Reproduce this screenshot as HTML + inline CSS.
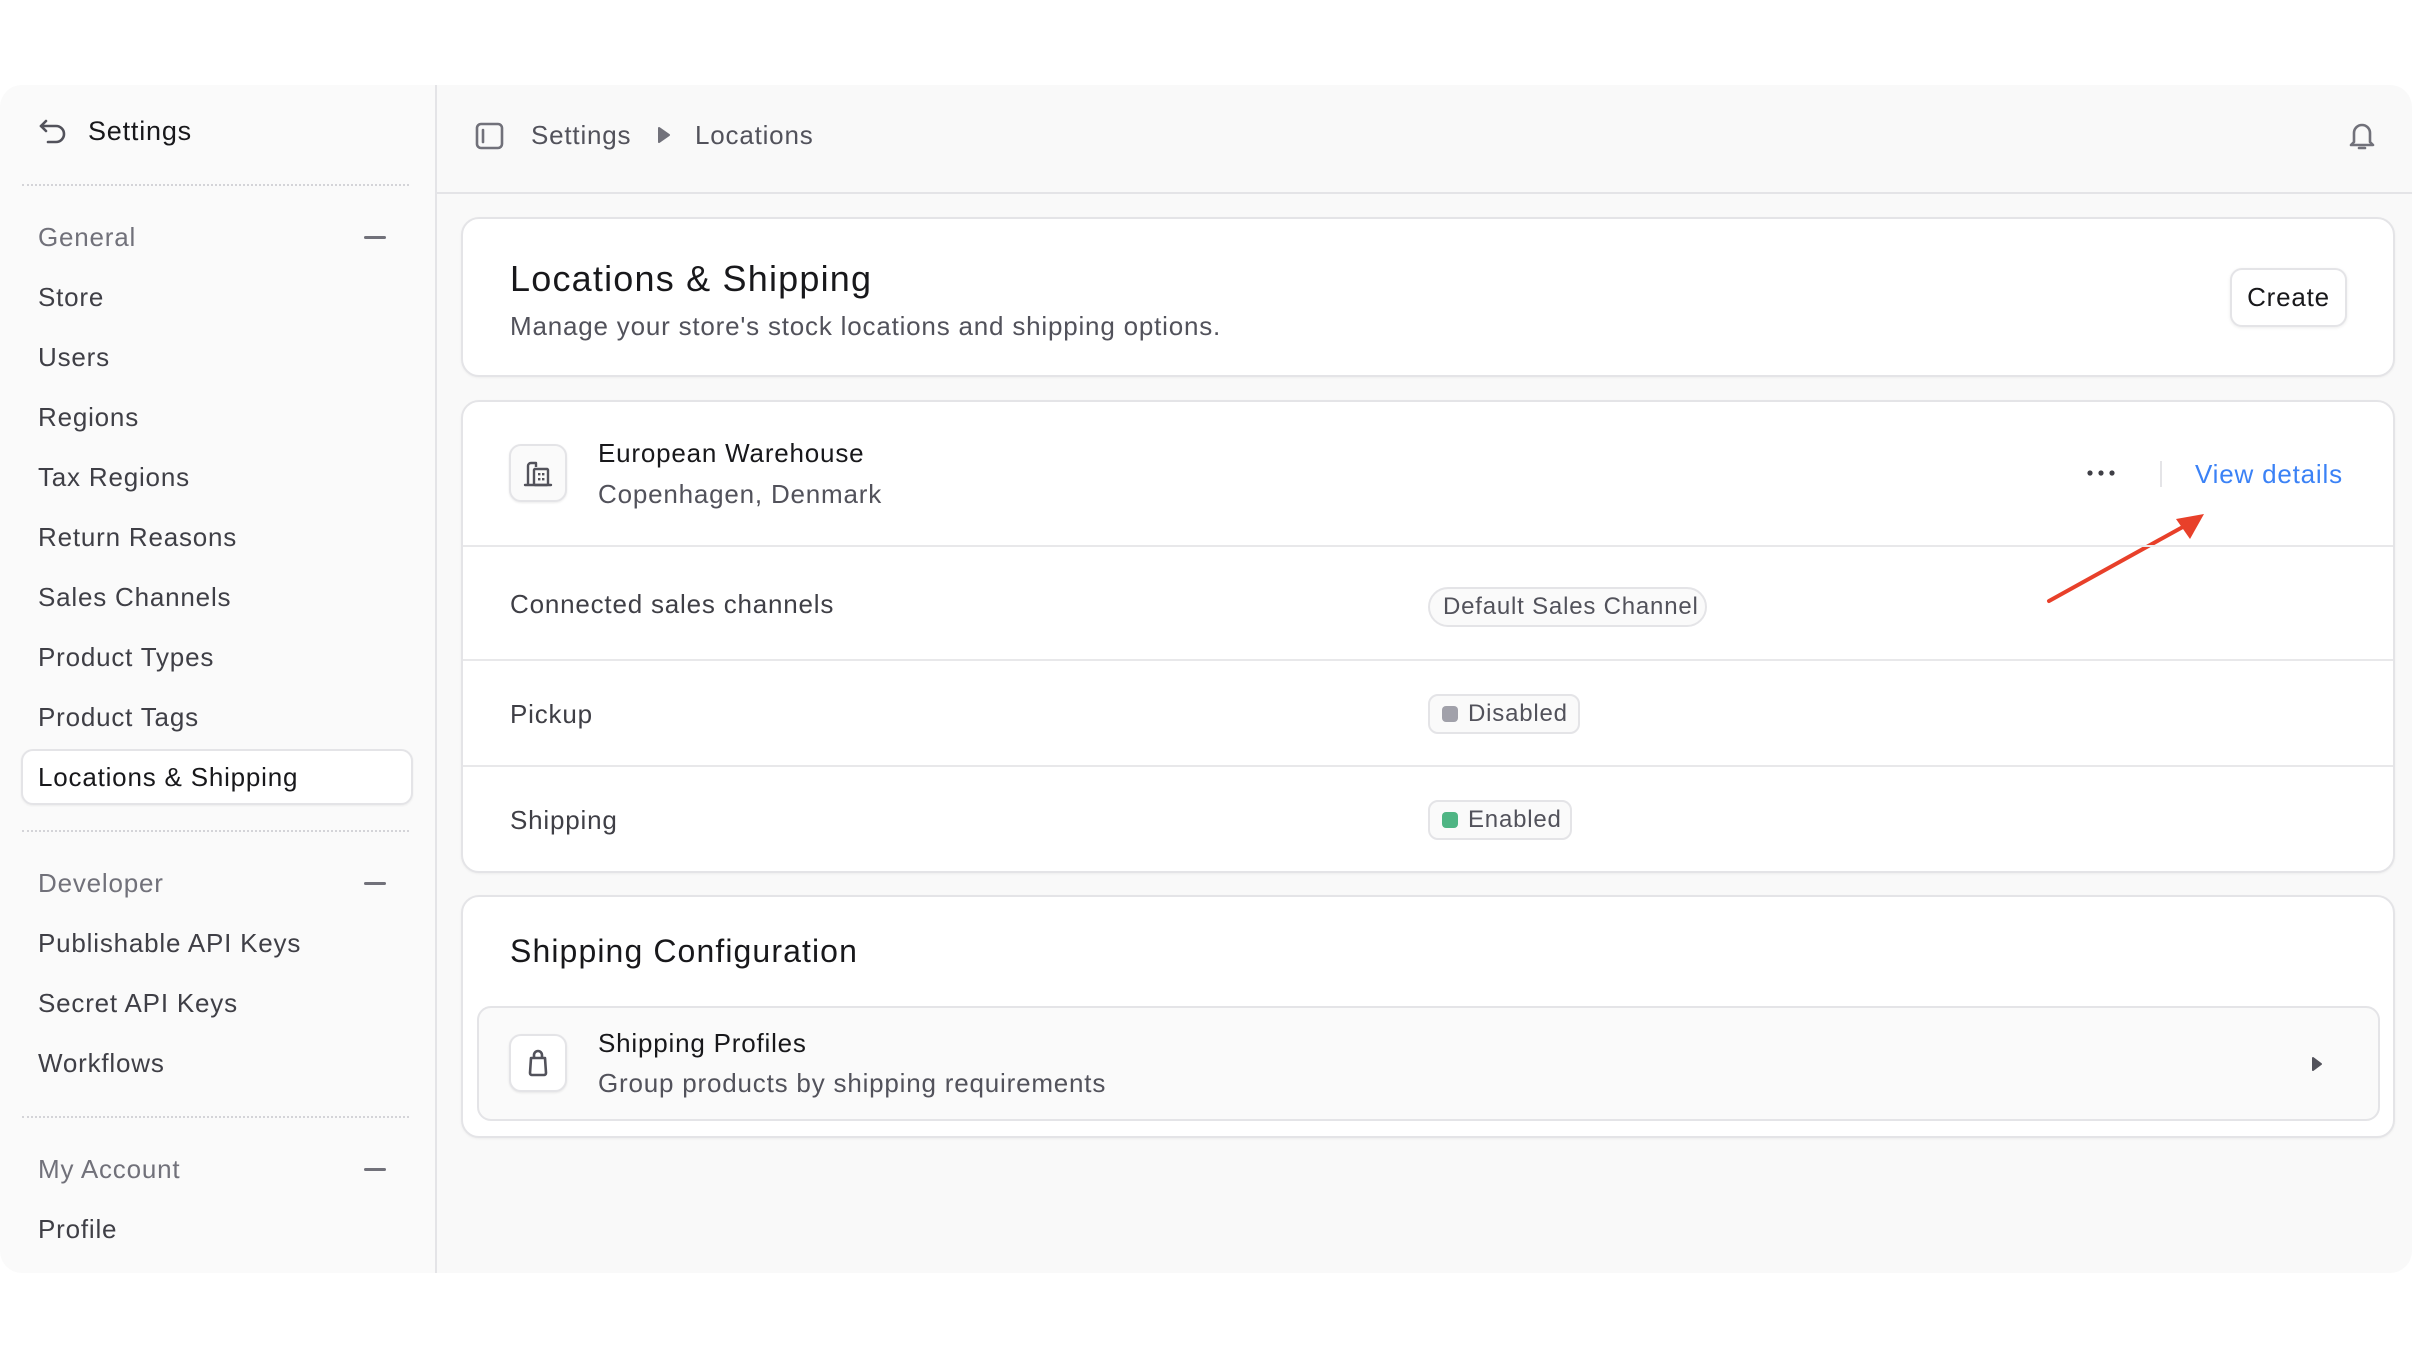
<!DOCTYPE html>
<html><head><meta charset="utf-8"><style>
*{box-sizing:border-box;margin:0;padding:0}
body{width:2412px;height:1357px;background:#fff;font-family:"Liberation Sans",sans-serif;position:relative;overflow:hidden;color:#18181b;letter-spacing:0.8px}
.abs{position:absolute}
.t{position:absolute;white-space:nowrap;line-height:30px;font-size:26px}
.side{left:0;top:85px;width:437px;height:1188px;background:#fafafa;border-right:2px solid #e4e4e7;border-radius:22px 0 0 22px}
.main{left:437px;top:85px;width:1975px;height:1188px;background:#f9f9f9;border-radius:0 22px 22px 0}
.dot{position:absolute;left:22px;width:387px;border-top:2px dotted #d4d4d8}
.nav{color:#3f3f46}
.grp{color:#71717a}
.minus{position:absolute;left:364px;width:22px;height:3px;background:#71717a;border-radius:2px}
.card{position:absolute;background:#fff;border:2px solid #e4e4e7;border-radius:18px;box-shadow:0 1px 2px rgba(0,0,0,.05)}
.hr{position:absolute;left:463px;width:1930px;height:2px;background:#e8e8ea}
.badge{position:absolute;border:2px solid #e4e4e7;background:#fafafa;font-size:24px;color:#52525b;line-height:36px;white-space:nowrap}
.sq{display:inline-block;width:16px;height:16px;border-radius:4px;vertical-align:-1px;margin-right:10px}
.ibox{position:absolute;width:58px;height:58px;border:2px solid #e4e4e7;border-radius:12px;background:#fafafa;box-shadow:0 1px 2px rgba(0,0,0,.08)}
</style></head><body>
<div class="abs side"></div>
<div class="abs main"></div>

<svg class="abs" style="left:38px;top:118px" width="30" height="28" viewBox="0 0 30 28" fill="none" stroke="#52525b" stroke-width="2.6" stroke-linecap="round" stroke-linejoin="round"><path d="M8 3 L3 8 L8 13"/><path d="M3 8 H18 a8 8 0 0 1 0 16 H10"/></svg>
<div class="t" style="left:88px;top:116px;font-size:27px;color:#18181b">Settings</div>
<div class="dot" style="top:184px"></div>
<div class="t grp" style="left:38px;top:222px">General</div><div class="minus" style="top:236px"></div>
<div class="t nav" style="left:38px;top:282px">Store</div>
<div class="t nav" style="left:38px;top:342px">Users</div>
<div class="t nav" style="left:38px;top:402px">Regions</div>
<div class="t nav" style="left:38px;top:462px">Tax Regions</div>
<div class="t nav" style="left:38px;top:522px">Return Reasons</div>
<div class="t nav" style="left:38px;top:582px">Sales Channels</div>
<div class="t nav" style="left:38px;top:642px">Product Types</div>
<div class="t nav" style="left:38px;top:702px">Product Tags</div>
<div class="abs" style="left:21px;top:749px;width:392px;height:56px;background:#fff;border:2px solid #e4e4e7;border-radius:12px;box-shadow:0 1px 2px rgba(0,0,0,.06)"></div>
<div class="t" style="left:38px;top:762px;color:#18181b">Locations &amp; Shipping</div>
<div class="dot" style="top:830px"></div>
<div class="t grp" style="left:38px;top:868px">Developer</div><div class="minus" style="top:882px"></div>
<div class="t nav" style="left:38px;top:928px">Publishable API Keys</div>
<div class="t nav" style="left:38px;top:988px">Secret API Keys</div>
<div class="t nav" style="left:38px;top:1048px">Workflows</div>
<div class="dot" style="top:1116px"></div>
<div class="t grp" style="left:38px;top:1154px">My Account</div><div class="minus" style="top:1168px"></div>
<div class="t nav" style="left:38px;top:1214px">Profile</div>

<div class="abs" style="left:437px;top:192px;width:1975px;height:2px;background:#e4e4e7"></div>
<svg class="abs" style="left:475px;top:122px" width="30" height="28" viewBox="0 0 30 28" fill="none" stroke="#71717a" stroke-width="2.6"><rect x="2" y="2" width="25" height="24" rx="4"/><path d="M8 8 V20" stroke-linecap="round"/></svg>
<div class="t" style="left:531px;top:120px;color:#52525b">Settings</div>
<svg class="abs" style="left:657px;top:126px" width="14" height="18" viewBox="0 0 14 18"><path d="M2 2 L12 9 L2 16 Z" fill="#71717a" stroke="#71717a" stroke-width="2" stroke-linejoin="round"/></svg>
<div class="t" style="left:695px;top:120px;color:#52525b">Locations</div>
<svg class="abs" style="left:2346px;top:120px" width="32" height="32" viewBox="0 0 32 32" fill="none" stroke="#71717a" stroke-width="2.6" stroke-linejoin="round"><path d="M8 22 V13 a8 8 0 0 1 16 0 V22 L27 25 H5 Z"/><path d="M13 28 h6" stroke-linecap="round"/></svg>

<div class="card" style="left:461px;top:217px;width:1934px;height:160px"></div>
<div class="t" style="left:510px;top:259px;font-size:36px;line-height:40px;color:#18181b;letter-spacing:1.2px">Locations &amp; Shipping</div>
<div class="t" style="left:510px;top:311px;color:#52525b">Manage your store's stock locations and shipping options.</div>
<div class="abs" style="left:2230px;top:268px;width:117px;height:59px;border:2px solid #e4e4e7;border-radius:12px;background:#fff;box-shadow:0 1px 3px rgba(0,0,0,.08);font-size:26px;line-height:55px;text-align:center;color:#18181b">Create</div>

<div class="card" style="left:461px;top:400px;width:1934px;height:473px"></div>
<div class="ibox" style="left:509px;top:444px"></div>
<svg class="abs" style="left:522px;top:457px" width="32" height="32" viewBox="0 0 32 32" fill="none" stroke="#52525b" stroke-width="2.4" stroke-linejoin="round"><path d="M6 28 V9 a3 3 0 0 1 3-3 H14 V10"/><rect x="12" y="12" width="14" height="16" rx="1"/><path d="M3 28 H29" stroke-linecap="round"/><g fill="#52525b" stroke="none"><rect x="16" y="16" width="2.4" height="2.4"/><rect x="20" y="16" width="2.4" height="2.4"/><rect x="16" y="21" width="2.4" height="2.4"/><rect x="20" y="21" width="2.4" height="2.4"/></g></svg>
<div class="t" style="left:598px;top:438px;color:#18181b">European Warehouse</div>
<div class="t" style="left:598px;top:479px;color:#52525b">Copenhagen, Denmark</div>
<svg class="abs" style="left:2086px;top:468px" width="30" height="10"><circle cx="4" cy="5" r="2.6" fill="#3f3f46"/><circle cx="15" cy="5" r="2.6" fill="#3f3f46"/><circle cx="26" cy="5" r="2.6" fill="#3f3f46"/></svg>
<div class="abs" style="left:2160px;top:461px;width:2px;height:26px;background:#e4e4e7"></div>
<div class="t" style="left:2195px;top:459px;color:#3b82f6">View details</div>
<svg class="abs" style="left:2040px;top:505px" width="180" height="105" viewBox="0 0 180 105"><path d="M9 96 L150 18" stroke="#e8402a" stroke-width="4" stroke-linecap="round"/><path d="M164 9 L136 14 L150 34 Z" fill="#e8402a"/></svg>
<div class="hr" style="top:545px"></div>
<div class="t" style="left:510px;top:589px;color:#3f3f46">Connected sales channels</div>
<div class="badge" style="left:1428px;top:587px;width:279px;height:40px;border-radius:20px;padding-left:13px">Default Sales Channel</div>
<div class="hr" style="top:659px"></div>
<div class="t" style="left:510px;top:699px;color:#3f3f46">Pickup</div>
<div class="badge" style="left:1428px;top:694px;width:152px;height:40px;border-radius:10px;padding-left:12px"><span class="sq" style="background:#a1a1aa"></span>Disabled</div>
<div class="hr" style="top:765px"></div>
<div class="t" style="left:510px;top:805px;color:#3f3f46">Shipping</div>
<div class="badge" style="left:1428px;top:800px;width:144px;height:40px;border-radius:10px;padding-left:12px"><span class="sq" style="background:#4fb584"></span>Enabled</div>

<div class="card" style="left:461px;top:895px;width:1934px;height:243px"></div>
<div class="t" style="left:510px;top:933px;font-size:32px;line-height:36px;color:#18181b;letter-spacing:1.1px">Shipping Configuration</div>
<div class="abs" style="left:477px;top:1006px;width:1903px;height:115px;background:#fafafa;border:2px solid #e4e4e7;border-radius:14px"></div>
<div class="ibox" style="left:509px;top:1034px;background:#fff"></div>
<svg class="abs" style="left:523px;top:1047px" width="30" height="32" viewBox="0 0 30 32" fill="none" stroke="#52525b" stroke-width="2.6" stroke-linejoin="round"><path d="M11 11 V8 a4 4 0 0 1 8 0 V11"/><path d="M8 11 H22 L23 26 a2 2 0 0 1-2 2 H9 a2 2 0 0 1-2-2 Z"/></svg>
<div class="t" style="left:598px;top:1028px;color:#18181b">Shipping Profiles</div>
<div class="t" style="left:598px;top:1068px;color:#52525b">Group products by shipping requirements</div>
<svg class="abs" style="left:2311px;top:1056px" width="12" height="16" viewBox="0 0 12 16"><path d="M2 2 L10 8 L2 14 Z" fill="#52525b" stroke="#52525b" stroke-width="2" stroke-linejoin="round"/></svg>
</body></html>
